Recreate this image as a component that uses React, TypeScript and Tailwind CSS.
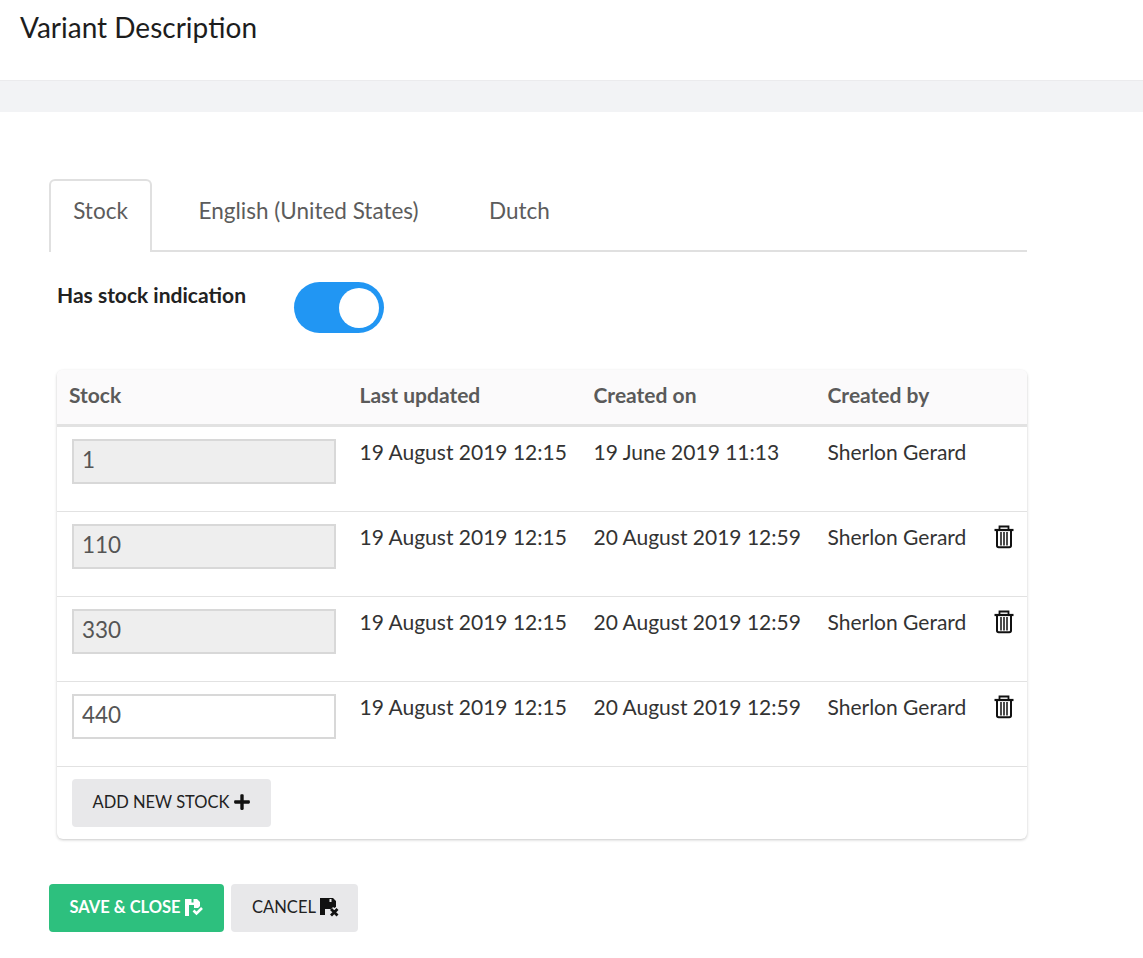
import { FaPlus } from 'react-icons/fa';

const rows = [
  { stock: '1', created: '19 June 2019 11:13', locked: true, removable: false },
  { stock: '110', created: '20 August 2019 12:59', locked: true, removable: true },
  { stock: '330', created: '20 August 2019 12:59', locked: true, removable: true },
  { stock: '440', created: '20 August 2019 12:59', locked: false, removable: true },
];

function TrashIcon() {
  return (
    <svg width="20" height="24" viewBox="0 0 20 24" fill="none" stroke="#111" strokeWidth="1.8">
      <path d="M5.500 4V1.500h9V4" />
      <path d="M0.500 5h19" strokeWidth="2.200" />
      <path d="M3 6v14.500q0 1.700 1.700 1.700h10.600q1.700 0 1.700-1.700V6" strokeWidth="2" />
      <path d="M7 7v13.500M10 7v13.500M13 7v13.500" strokeWidth="1.500" />
    </svg>
  );
}

function SaveCheckIcon() {
  return (
    <svg width="19" height="17" viewBox="0 0 19 17">
      <path d="M0 0h12l3 3v6H4v8H0z" fill="#fff" />
      <path d="M6.500 0h2v3.500h-2z" fill="#2dc07e" />
      <path d="M4 6h5v3H4z" fill="#2dc07e" />
      <path d="M8.500 11.500l3 3 5.500-5.500" fill="none" stroke="#2dc07e" strokeWidth="5.500" />
      <path d="M8.500 11.500l3 3 5.500-5.500" fill="none" stroke="#fff" strokeWidth="2.600" />
    </svg>
  );
}

function SaveCancelIcon() {
  return (
    <svg width="20" height="19" viewBox="0 0 20 19">
      <path d="M0 0h13l3 3v8H5v6H0z" fill="#111" />
      <path d="M9.500 1h2v3h-2z" fill="#e8e8ea" />
      <path d="M11 11l6.500 6.500M17.500 11L11 17.500" fill="none" stroke="#e8e8ea" strokeWidth="6" />
      <path d="M11 11l6.500 6.500M17.500 11L11 17.500" fill="none" stroke="#111" strokeWidth="2.800" />
    </svg>
  );
}

export default function App() {
  return (
    <div className="min-h-[958px] bg-white font-['Lato','Noto_Sans',sans-serif] text-[#333]">
      <header className="h-[81px] border-b border-[#ebebed] pl-5 pt-[9px]">
        <h1 className="text-[28px] leading-9 text-[#1d1d1d]">
          Variant Descrip<span className="[font-feature-settings:'dlig']">ti</span>on
        </h1>
      </header>
      <div className="h-[31px] bg-[#f2f3f5]"></div>

      <main className="pl-[49px] pt-[67px] w-[1027px] box-content">
        <div className="flex h-[73px] w-[978px] border-b-2 border-[#e0e0e0] text-[22.500px] text-[#5c5c5c]">
          <div className="h-[73px] w-[103px] rounded-t-md border-2 border-b-0 border-[#e0e0e0] bg-white pt-[14px] text-center leading-8">
            Stock
          </div>
          <div className="pl-[46.500px] pt-4 leading-8">English (United States)</div>
          <div className="pl-[70.500px] pt-4 leading-8">Dutch</div>
        </div>

        <div className="flex pl-2 pt-[29px]">
          <label className="w-[237px] text-[21px] font-bold leading-7 text-[#222]">
            Has stock indica<span className="[font-feature-settings:'dlig']">ti</span>on
          </label>
          <div className="mt-[1px] flex h-[51px] w-[90px] items-center justify-end rounded-full bg-[#2196f3] pr-[5px]">
            <div className="h-[40px] w-[40px] rounded-full bg-white"></div>
          </div>
        </div>

        <div className="ml-2 mt-[37px] w-[970px] rounded-md bg-white shadow-[0_1px_3px_rgba(0,0,0,0.22)]">
          <div className="grid h-[57px] grid-cols-[302.500px_234px_234px_1fr] items-center rounded-t-md border-b-[3px] border-[#e2e2e2] bg-[#fbfafb] pb-[5px] text-[21px] font-bold text-[#5a5a5a]">
            <div className="pl-3">Stock</div>
            <div>Last updated</div>
            <div>Created on</div>
            <div>Created by</div>
          </div>

          {rows.map((row) => (
            <div
              key={row.stock}
              className="grid h-[85px] grid-cols-[302.500px_234px_234px_1fr] border-b border-[#e2e2e2] pt-[11px] text-[21px] leading-7 text-[#333]"
            >
              <div className="pl-[15px] pt-[1px]">
                <input
                  readOnly
                  value={row.stock}
                  className={`h-[45px] w-[264px] border-2 border-[#d8d8d8] pb-1 pl-2 text-[22.500px] text-[#555] outline-none ${
                    row.locked ? 'bg-[#eeeeee]' : 'bg-white'
                  }`}
                />
              </div>
              <div>19 August 2019 12:15</div>
              <div>{row.created}</div>
              <div className="flex justify-between pr-[13px]">
                <span>Sherlon Gerard</span>
                {row.removable && (
                  <span className="pt-[2px]">
                    <TrashIcon />
                  </span>
                )}
              </div>
            </div>
          ))}

          <div className="h-[72px] pl-[15px] pt-3">
            <button className="flex h-12 w-[199px] items-center justify-center gap-[3px] rounded bg-[#e8e8ea] pb-[2px] text-[16.500px] text-[#222]">
              ADD NEW STOCK
              <FaPlus className="text-[18px] text-[#111]" />
            </button>
          </div>
        </div>

        <div className="flex gap-[7px] pt-[45px]">
          <button className="flex h-12 w-[175px] items-center justify-center gap-1 rounded bg-[#2dc07e] pb-[2px] text-[16.500px] font-bold text-white">
            SAVE &amp; CLOSE
            <SaveCheckIcon />
          </button>
          <button className="flex h-12 w-[127px] items-center justify-center gap-1 rounded bg-[#e8e8ea] pb-[2px] pl-[3px] text-[16.500px] text-[#222]">
            CANCEL
            <SaveCancelIcon />
          </button>
        </div>
      </main>
    </div>
  );
}
